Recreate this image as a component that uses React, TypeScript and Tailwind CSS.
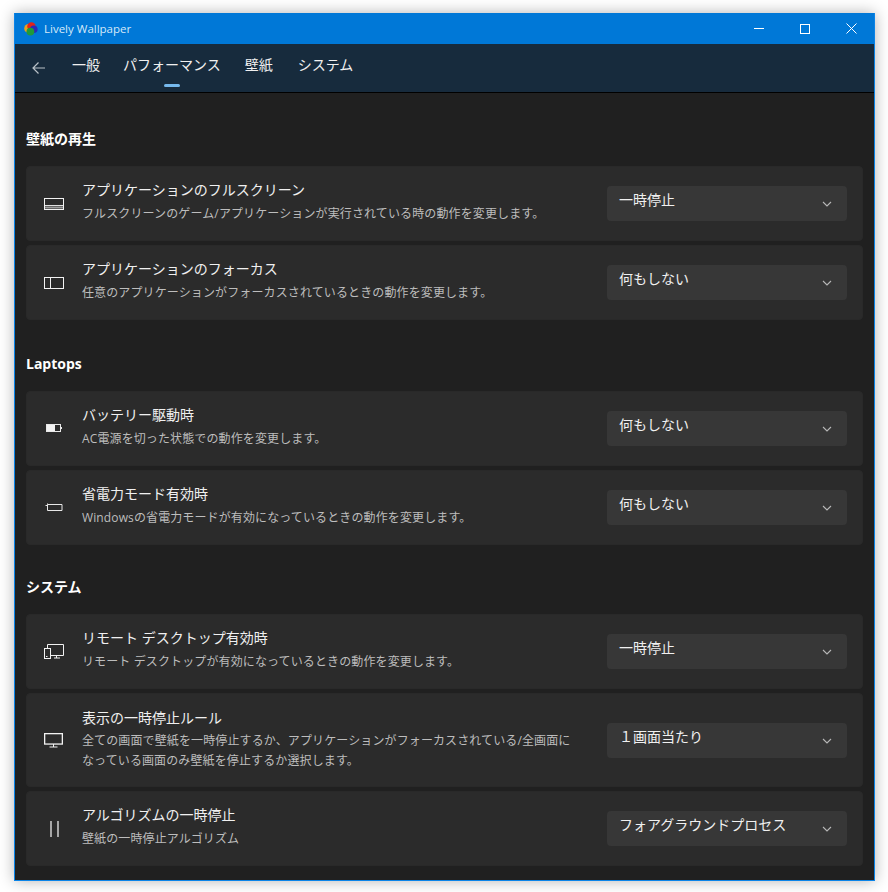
import React from "react";

const font = { fontFamily: '"Open Sans", "Noto Sans CJK JP", sans-serif' };

function IconFullscreen() {
  return (
    <svg width="20" height="14" viewBox="0 0 20 14" fill="none" stroke="#f2f2f2" strokeWidth="1">
      <rect x="0.5" y="1.5" width="19" height="11" />
      <path d="M1 8.5h18" stroke="#e0e0e0" />
      <path d="M1 10.5h18" stroke="#9c9c9c" strokeWidth="2" />
    </svg>
  );
}

function IconFocus() {
  return (
    <svg width="20" height="12" viewBox="0 0 20 12" fill="none" stroke="#f2f2f2" strokeWidth="1">
      <rect x="0.5" y="0.5" width="19" height="11" />
      <path d="M6.5 1v10" />
    </svg>
  );
}

function IconBattery() {
  return (
    <svg width="17" height="9" viewBox="0 0 17 9" fill="none">
      <rect x="0.5" y="0.5" width="14" height="7" fill="#2b2b2b" stroke="#e8e8e8" />
      <rect x="1" y="1" width="8" height="6" fill="#f2f2f2" />
      <path d="M15 3h1v2h-1z" fill="#e8e8e8" />
    </svg>
  );
}

function IconSaver() {
  return (
    <svg width="18" height="9" viewBox="0 0 18 9" fill="none" stroke="#e8e8e8">
      <path d="M2.5 1.5h14.5v6H2.5z" />
      <path d="M0.5 2.5h2" />
      <path d="M2.5 0.5v1" />
    </svg>
  );
}

function IconRemote() {
  return (
    <svg width="20" height="15" viewBox="0 0 20 15" fill="none" stroke="#f2f2f2">
      <path d="M3.5 4V0.5h16v11h-13" />
      <path d="M10 14h6M12.5 12v2" />
      <rect x="0.5" y="4.5" width="6" height="10" />
      <path d="M2 12.5h1.5" />
    </svg>
  );
}

function IconMonitor() {
  return (
    <svg width="20" height="15" viewBox="0 0 20 15" fill="none" stroke="#f2f2f2" strokeWidth="1.3">
      <rect x="0.65" y="0.65" width="17.7" height="10.4" />
      <path d="M9.5 11v3M5.5 14h8" strokeWidth="1" />
    </svg>
  );
}

function IconPause() {
  return (
    <svg width="9" height="16" viewBox="0 0 9 16" fill="none" stroke="#dcdcdc" strokeWidth="1.4">
      <path d="M1 0v16M8 0v16" />
    </svg>
  );
}

function Chevron() {
  return (
    <svg width="10" height="6" viewBox="0 0 10 6" fill="none" stroke="#b8b8b8" strokeWidth="1.1">
      <path d="M1 1l4 4 4-4" />
    </svg>
  );
}

function SettingRow({
  icon,
  title,
  desc,
  value,
  tall,
}: {
  icon: React.ReactNode;
  title: string;
  desc: React.ReactNode;
  value: string;
  tall?: boolean;
}) {
  return (
    <div className={`flex items-center rounded-[4px] border border-[#292929] bg-[#2b2b2b] ${tall ? "h-[94px]" : "h-[75px]"}`}>
      <div className="flex w-[55px] shrink-0 justify-center pr-[1px]">{icon}</div>
      <div className={`min-w-0 flex-1 ${tall ? "pb-[2px]" : "pb-[3px]"}`}>
        <div className="text-[14px] leading-[20px] text-[#f0f0f0]">{title}</div>
        <div className={`text-[12px] leading-[20px] tracking-[0.12px] text-[#bdbdbd] ${tall ? "mt-[3px]" : "mt-[4px]"}`}>{desc}</div>
      </div>
      <div className="mr-[15px] flex h-[35px] w-[240px] shrink-0 items-start justify-between rounded-[4px] bg-[#373737] pl-[12px] pr-[15px]">
        <span className="mt-[4px] text-[14px] leading-[20px] text-[#f0f0f0]">{value}</span>
        <span className="mt-[15px] flex"><Chevron /></span>
      </div>
    </div>
  );
}

export default function App() {
  return (
    <div className="h-[892px] w-[888px] overflow-hidden bg-white pl-[14px] pt-[13px]" style={font}>
      <div className="flex h-[868px] w-[861px] flex-col border border-t-0 border-[#0a84e8] shadow-[0_0_14px_rgba(0,0,0,0.3)]">
        <div className="flex h-[31px] shrink-0 items-center bg-[#0078d7] pl-[9px]">
          <svg width="14" height="14" viewBox="0 0 14 14">
            <circle cx="4.6" cy="6.4" r="4.4" fill="#e9a11c" />
            <circle cx="7.4" cy="4.4" r="4.2" fill="#e2231a" />
            <circle cx="9.8" cy="7.2" r="3.8" fill="#2a2ab8" />
            <circle cx="6.4" cy="9.6" r="3.9" fill="#1f9a3a" />
          </svg>
          <span className="ml-[6px] text-[11.5px] text-[#d6e9f8]">Lively Wallpaper</span>
          <div className="ml-auto flex h-full items-center">
            <div className="mr-[36px] h-[1px] w-[10px] bg-white" />
            <div className="mr-[36px] h-[10px] w-[10px] border border-white" />
            <svg width="11" height="11" viewBox="0 0 11 11" stroke="white" strokeWidth="1" className="mr-[17px]">
              <path d="M0.5 0.5l10 10M10.5 0.5l-10 10" />
            </svg>
          </div>
        </div>
        <div className="relative flex h-[49px] shrink-0 items-start border-b border-black bg-[#172b3d] text-[14px] text-[#f0f0f0]">
          <svg width="16" height="14" viewBox="0 0 16 14" fill="none" stroke="#b9c1c8" strokeWidth="1.2" className="ml-[16px] mt-[17px]">
            <path d="M14 7H2M7.5 1.5L2 7l5.5 5.5" />
          </svg>
          <div className="ml-[25px] mt-[11px] flex gap-[24px] leading-[20px]">
            <span>一般</span>
            <span className="relative ml-[-1px]">
              パフォーマンス
              <span className="absolute left-[41px] top-[29px] h-[3px] w-[16px] rounded-full bg-[#76b9ed]" />
            </span>
            <span>壁紙</span>
            <span className="ml-[1px]">システム</span>
          </div>
        </div>
        <div className="flex-1 bg-[#202020] px-[11px] pt-[36px]">
          <h2 className="text-[14px] font-bold leading-[20px] text-white">壁紙の再生</h2>
          <div className="mt-[17px] flex flex-col gap-[4px]">
            <SettingRow icon={<IconFullscreen />} title="アプリケーションのフルスクリーン" desc="フルスクリーンのゲーム/アプリケーションが実行されている時の動作を変更します。" value="一時停止" />
            <SettingRow icon={<IconFocus />} title="アプリケーションのフォーカス" desc="任意のアプリケーションがフォーカスされているときの動作を変更します。" value="何もしない" />
          </div>
          <h2 className="mt-[34px] text-[14px] font-bold leading-[20px] text-white">Laptops</h2>
          <div className="mt-[17px] flex flex-col gap-[4px]">
            <SettingRow icon={<IconBattery />} title="バッテリー駆動時" desc="AC電源を切った状態での動作を変更します。" value="何もしない" />
            <SettingRow icon={<IconSaver />} title="省電力モード有効時" desc="Windowsの省電力モードが有効になっているときの動作を変更します。" value="何もしない" />
          </div>
          <h2 className="mt-[32px] text-[14px] font-bold leading-[20px] text-white">システム</h2>
          <div className="mt-[17px] flex flex-col gap-[4px]">
            <SettingRow icon={<IconRemote />} title="リモート デスクトップ有効時" desc="リモート デスクトップが有効になっているときの動作を変更します。" value="一時停止" />
            <SettingRow
              tall
              icon={<IconMonitor />}
              title="表示の一時停止ルール"
              desc={
                <>
                  全ての画面で壁紙を一時停止するか、アプリケーションがフォーカスされている/全画面に
                  <br />
                  なっている画面のみ壁紙を停止するか選択します。
                </>
              }
              value="１画面当たり"
            />
            <SettingRow icon={<IconPause />} title="アルゴリズムの一時停止" desc="壁紙の一時停止アルゴリズム" value="フォアグラウンドプロセス" />
          </div>
        </div>
      </div>
    </div>
  );
}
